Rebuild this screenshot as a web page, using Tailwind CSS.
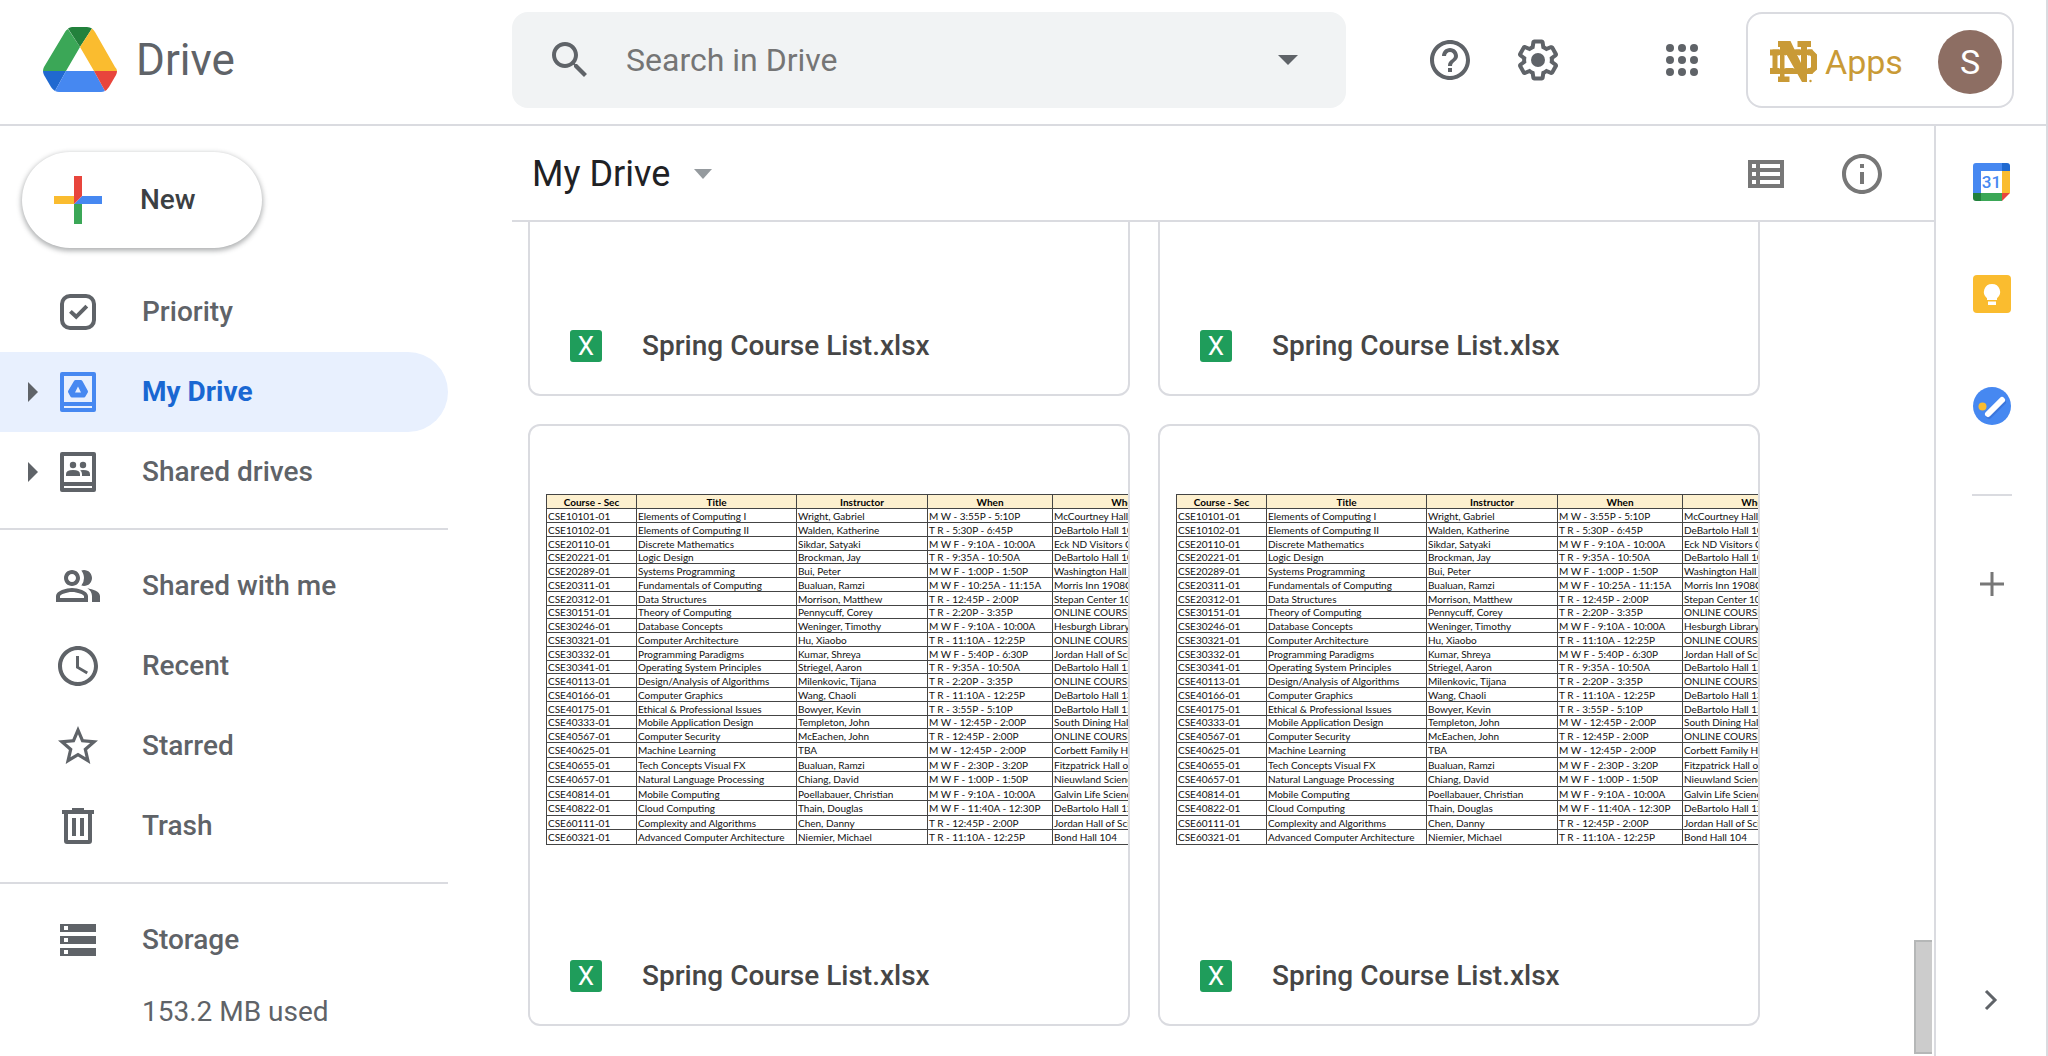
<!DOCTYPE html>
<html lang="en">
<head>
<meta charset="utf-8">
<meta name="viewport" content="width=device-width, initial-scale=1">
<title>My Drive - Google Drive</title>
<script src="https://cdn.jsdelivr.net/npm/@tailwindcss/browser@4"></script>
</head>
<body class="flex h-screen flex-col overflow-hidden border-r-2 border-[#dadbe0] bg-white font-['Roboto',sans-serif] text-[#5f6368]">

<header class="flex h-[126px] shrink-0 items-center border-b-2 border-[#dadbe0] pb-1">
  <a href="#" class="flex w-[512px] shrink-0 items-center gap-[18px] pl-[42px]" aria-label="Drive">
    <svg class="h-[68px] w-[76px]" viewBox="0 0 76 68" aria-hidden="true">
      <path fill="#3ba757" d="M26 3Q24 4 23 6L2 41Q1 43 1 45H24L38 21Z"/>
      <path fill="#22813c" d="M26 2.500Q28 1 30 1H45Q48 1 50 2.500L38 21Z"/>
      <path fill="#fabc2f" d="M50 2.500Q51.500 3.500 53 6L73 41Q75 43 75 45H52L38 21Z"/>
      <path fill="#2069d0" d="M1 45Q1 47 2 49L9 61Q10.500 63.500 13 65L24 45Z"/>
      <path fill="#4688f1" d="M24 45H52L63 65Q61 66 59 66H17Q15 66 13 65Z"/>
      <path fill="#e8453c" d="M52 45H75Q75 47 74 49L67 61Q65 64 63 65Z"/>
    </svg>
    <span class="text-[44px] leading-[52px]">Drive</span>
  </a>

  <form class="flex h-24 w-[834px] min-w-0 items-center rounded-2xl bg-[#f1f3f4] pl-[34px] pr-[48px]" role="search">
    <button type="button" aria-label="Search">
      <svg class="size-12 fill-current" viewBox="0 0 24 24"><path d="M15.5 14h-.79l-.28-.27C15.41 12.59 16 11.11 16 9.500 16 5.910 13.090 3 9.500 3S3 5.910 3 9.500 5.910 16 9.500 16c1.610 0 3.090-.59 4.230-1.570l.27.28v.79l5 4.990L20.490 19l-4.990-5zm-6 0C7.010 14 5 11.990 5 9.500S7.010 5 9.500 5 14 7.010 14 9.500 11.990 14 9.500 14z"/></svg>
    </button>
    <input type="text" aria-label="Search in Drive" placeholder="Search in Drive" class="ml-8 h-16 min-w-0 flex-1 bg-transparent text-[32px] text-[#202124] outline-none placeholder:text-[#757575]">
    <button type="button" aria-label="Search options"><svg class="h-[10px] w-5 fill-current" viewBox="0 0 20 10"><path d="M0 0h20L10 10z"/></svg></button>
  </form>

  <div class="ml-auto flex shrink-0 items-center">
    <button type="button" aria-label="Support" class="mr-10"><svg class="size-12 fill-current" viewBox="0 0 24 24"><path d="M11 18h2v-2h-2v2zm1-16C6.480 2 2 6.480 2 12s4.480 10 10 10 10-4.480 10-10S17.520 2 12 2zm0 18c-4.410 0-8-3.590-8-8s3.590-8 8-8 8 3.590 8 8-3.590 8-8 8zm0-14c-2.210 0-4 1.790-4 4h2c0-1.100.9-2 2-2s2 .9 2 2c0 2-3 1.750-3 5h2c0-2.250 3-2.500 3-5 0-2.210-1.790-4-4-4z"/></svg></button>
    <button type="button" aria-label="Settings" class="mr-24"><svg class="size-12 fill-current" viewBox="0 0 24 24"><path d="M13.850 22.250h-3.700c-.74 0-1.360-.54-1.450-1.270l-.27-1.890c-.27-.14-.53-.29-.79-.46l-1.800.72c-.7.26-1.470-.03-1.810-.65L2.200 15.530c-.35-.66-.2-1.440.36-1.880l1.530-1.190c-.01-.15-.02-.3-.02-.46 0-.15.01-.31.02-.46l-1.520-1.190c-.59-.45-.74-1.260-.37-1.880l1.850-3.190c.34-.62 1.110-.9 1.790-.63l1.810.73c.26-.17.52-.32.78-.46l.27-1.910c.09-.7.71-1.250 1.440-1.250h3.700c.74 0 1.360.54 1.450 1.270l.27 1.890c.27.14.53.29.79.46l1.800-.72c.71-.26 1.480.03 1.820.65l1.840 3.180c.36.66.2 1.440-.36 1.880l-1.520 1.190c.01.15.02.3.02.46s-.01.31-.02.46l1.520 1.190c.56.45.72 1.230.37 1.860l-1.860 3.220c-.34.62-1.110.9-1.800.63l-1.800-.72c-.26.17-.52.32-.78.46l-.27 1.910c-.1.68-.72 1.220-1.460 1.220zm-3.230-2h2.760l.37-2.550.53-.22c.44-.18.88-.44 1.340-.78l.45-.34 2.380.96 1.380-2.400-2.030-1.580.07-.56c.03-.26.06-.51.06-.78s-.03-.53-.06-.78l-.07-.56 2.030-1.580-1.390-2.400-2.390.96-.45-.35c-.42-.32-.87-.58-1.330-.77l-.52-.22-.37-2.550h-2.760l-.37 2.550-.53.21c-.44.19-.88.44-1.340.79l-.45.33-2.380-.95-1.390 2.390 2.030 1.580-.07.56a7 7 0 0 0-.06.79c0 .26.02.53.06.78l.07.56-2.030 1.580 1.380 2.400 2.390-.96.45.35c.43.33.86.58 1.330.77l.53.22.38 2.550z"/><circle cx="12" cy="12" r="3.500"/></svg></button>
    <button type="button" aria-label="Google apps" class="mr-10"><svg class="size-12 fill-current" viewBox="0 0 24 24"><circle cx="6" cy="6" r="2"/><circle cx="12" cy="6" r="2"/><circle cx="18" cy="6" r="2"/><circle cx="6" cy="12" r="2"/><circle cx="12" cy="12" r="2"/><circle cx="18" cy="12" r="2"/><circle cx="6" cy="18" r="2"/><circle cx="12" cy="18" r="2"/><circle cx="18" cy="18" r="2"/></svg></button>
    <button type="button" aria-label="Account" class="mr-8 flex h-24 w-[268px] items-center rounded-2xl border-2 border-[#dadbe0] pl-[22px] pr-[10px] pt-1 text-left">
      <svg class="h-[42px] w-[47px] shrink-0" viewBox="0 0 47 42" fill="#c99a36" aria-hidden="true">
        <path fill-rule="evenodd" d="M0 8.500h42l5 5V28.500l-5 4.500H0v-6h2.500V14.500H0zM7.500 14.500V27H40l1-1V15.500l-1-1z"/>
        <path stroke="#fff" stroke-width="1.600" paint-order="stroke" d="M8 0h12.500L31 22V6h-3.500V0H41v6h-4v35h-5L14.500 10v25.500h5V41H8v-5.500h2V6H8z"/>
        <path d="M2.500 8.500h40v5.500h-40zM2.500 27.500h40V33h-40z"/>
        <circle cx="40.500" cy="40" r="1.200"/>
      </svg>
      <span class="ml-2 text-[34px] leading-10 text-[#c99a36]">Apps</span>
      <span class="ml-auto flex size-16 items-center justify-center rounded-full bg-[#8d6e63] text-[34px] leading-10 text-white">S</span>
    </button>
  </div>
</header>

<div class="flex min-h-0 flex-1">
  <aside class="w-[512px] shrink-0 overflow-hidden pt-[26px]">
    <button type="button" class="ml-[22px] flex h-24 w-60 items-center rounded-full bg-white pl-8 text-[28px] font-medium leading-8 text-[#3c4043] shadow-[0_2px_5px_1px_rgba(60,64,67,0.4)]">
      <svg class="mr-[38px] size-12" viewBox="0 0 48 48" aria-hidden="true"><path fill="#fabc2f" d="M0 20h20v8H0z"/><path fill="#3ba757" d="M20 28h8v20h-8z"/><path fill="#4688f1" d="M28 20h20v8H20z"/><path fill="#e8453c" d="M20 0h8v20l-8 8z"/></svg>
      New
    </button>

    <nav class="mt-6 w-[448px] text-[28px] font-medium leading-8" aria-label="Drive sections">
      <a href="#" class="flex h-20 items-center pl-[54px]">
        <svg class="mr-10 size-12" viewBox="0 0 24 24" fill="none" stroke="currentColor" stroke-width="2"><rect x="4" y="4" width="16" height="16" rx="4"/><path d="M8.200 11.700l2.900 2.700 5.300-5.300"/></svg>Priority
      </a>
      <a href="#" aria-current="page" class="flex h-20 items-center rounded-r-full bg-[#e8f0fe] pl-7 font-bold text-[#1967d2]">
        <svg class="mr-4 h-5 w-[10px] fill-[#5f6368]" viewBox="0 0 10 20"><path d="M0 0l10 10L0 20z"/></svg>
        <svg class="mr-10 size-12" viewBox="0 0 24 24" fill="#4688f1" fill-rule="evenodd"><path d="M4 2h16q1 0 1 1v18q0 1-1 1H4q-1 0-1-1V3q0-1 1-1zm1 2v13h14V4zm0 15v1h14v-1z"/><path d="M10.800 6h2.600q.5 0 .8.500l2.700 4.900q.2.400 0 .800l-1.200 2.100q-.2.500-.7.500H9q-.5 0-.8-.5l-1.100-2.100q-.2-.4 0-.8l2.900-4.900q.3-.5.800-.5zM12 9.300l-1.500 2.900h3z"/></svg>My Drive
      </a>
      <a href="#" class="flex h-20 items-center pl-7">
        <svg class="mr-4 h-5 w-[10px] fill-current" viewBox="0 0 10 20"><path d="M0 0l10 10L0 20z"/></svg>
        <svg class="mr-10 size-12 fill-current" viewBox="0 0 24 24" fill-rule="evenodd"><path d="M4 2h16q1 0 1 1v18q0 1-1 1H4q-1 0-1-1V3q0-1 1-1zm1 2v13h14V4zm0 15v1h14v-1z"/><circle cx="9.500" cy="8.500" r="1.600"/><circle cx="14.500" cy="8.500" r="1.600"/><path d="M6 14v-.9q0-2.100 3.500-2.100t3.500 2.100V14zM14 14v-1q0-1.200-.9-1.900 4.900-.5 4.900 2V14z"/></svg>Shared drives
      </a>
      <hr class="my-4 border-t-2 border-[#dadbe0]">
      <a href="#" class="flex h-20 items-center pl-[54px]">
        <svg class="mr-10 size-12 fill-current" viewBox="0 0 24 24" fill-rule="evenodd"><path d="M15 8c0-1.420-.5-2.730-1.330-3.760.42-.14.86-.24 1.330-.24 2.210 0 4 1.790 4 4s-1.790 4-4 4c-.43 0-.84-.09-1.230-.21-.03-.01-.06-.02-.1-.03A5.980 5.980 0 0 0 15 8zm1.660 5.130C18.030 14.060 19 15.320 19 17v3h4v-3c0-2.180-3.580-3.470-6.340-3.870zM9 6c-1.100 0-2 .9-2 2s.9 2 2 2 2-.9 2-2-.9-2-2-2m0-2c2.210 0 4 1.790 4 4s-1.790 4-4 4-4-1.790-4-4 1.790-4 4-4zM9 15c-2.700 0-5.800 1.290-6 2.010V18h12v-1c-.2-.71-3.300-2-6-2m0-2c2.670 0 8 1.340 8 4v3H1v-3c0-2.660 5.330-4 8-4z"/></svg>Shared with me
      </a>
      <a href="#" class="flex h-20 items-center pl-[54px]">
        <svg class="mr-10 size-12 fill-current" viewBox="0 0 24 24"><path d="M11.990 2C6.470 2 2 6.480 2 12s4.470 10 9.990 10C17.520 22 22 17.520 22 12S17.520 2 11.990 2zM12 20c-4.420 0-8-3.580-8-8s3.580-8 8-8 8 3.580 8 8-3.580 8-8 8zm.5-13H11v6l5.250 3.150.75-1.230-4.500-2.670z"/></svg>Recent
      </a>
      <a href="#" class="flex h-20 items-center pl-[54px]">
        <svg class="mr-10 size-12 fill-current" viewBox="0 0 24 24"><path d="M22 9.240l-7.190-.62L12 2 9.190 8.630 2 9.240l5.460 4.730L5.820 21 12 17.270 18.180 21l-1.630-7.030L22 9.240zM12 15.400l-3.760 2.270 1-4.280-3.320-2.880 4.380-.38L12 6.100l1.710 4.040 4.380.38-3.320 2.880 1 4.280L12 15.400z"/></svg>Starred
      </a>
      <a href="#" class="flex h-20 items-center pl-[54px]">
        <svg class="mr-10 size-12 fill-current" viewBox="0 0 24 24" fill-rule="evenodd"><path d="M9 3h6v1h5v2h-1v13.500q0 1.500-1.500 1.500h-11Q5 21 5 19.500V6H4V4h5zM7 6v13h10V6zM9 8h2v9H9zM13 8h2v9h-2z"/></svg>Trash
      </a>
      <hr class="my-4 border-t-2 border-[#dadbe0]">
      <a href="#" class="flex h-20 items-center pl-[54px]">
        <svg class="mr-10 size-12 fill-current" viewBox="0 0 24 24" fill-rule="evenodd"><path d="M3 4h18v4H3zM5 5v2h2V5zM3 10h18v4H3zM5 11v2h2v-2zM3 16h18v4H3zM5 17v2h2v-2z"/></svg>Storage
      </a>
      <p class="mt-4 pl-[142px] font-normal">153.2 MB used</p>
    </nav>
  </aside>

  <main class="flex min-w-0 flex-1 flex-col">
    <div class="flex h-24 shrink-0 items-center border-b-2 border-[#dadbe0] pl-5 pr-12 pt-0.5">
      <button type="button" class="flex items-center gap-6 text-[36px] leading-10 text-[#202124]">My Drive
        <svg class="h-[10px] w-[18px] fill-[#959a9e]" viewBox="0 0 18 10"><path d="M0 0h18L9 10z"/></svg></button>
      <button type="button" aria-label="List view" class="ml-auto mr-12"><svg class="size-12 fill-[#777777]" viewBox="0 0 24 24" fill-rule="evenodd"><path d="M3 5h18v14H3zM5 7v2h2V7zM9 7v2h10V7zM5 11v2h2v-2zM9 11v2h10v-2zM5 15v2h2v-2zM9 15v2h10v-2z"/></svg></button>
      <button type="button" aria-label="View details"><svg class="size-12 fill-[#777777]" viewBox="0 0 24 24"><path d="M11 7h2v2h-2zM11 11h2v6h-2zM12 2C6.480 2 2 6.480 2 12s4.480 10 10 10 10-4.480 10-10S17.520 2 12 2zm0 18c-4.410 0-8-3.590-8-8s3.590-8 8-8 8 3.590 8 8-3.590 8-8 8z"/></svg></button>
    </div>
    <div class="flex min-h-0 flex-1">
      <div class="flex min-w-0 flex-1 flex-col justify-end overflow-hidden pb-[30px] pl-4">
        <div id="files" class="grid grid-cols-[repeat(auto-fill,602px)] gap-7"></div>
      </div>
      <div class="flex w-5 shrink-0 flex-col justify-end pb-[2px]" aria-hidden="true">
        <div class="h-[114px] w-[18px] border-2 border-r-0 border-[#b5b7b7] bg-[#cccccc]"></div>
      </div>
    </div>
  </main>

  <aside class="flex w-[112px] shrink-0 flex-col items-center border-l-2 border-[#dadbe0] pb-11 pl-0.5 pt-9" aria-label="Side panel">
    <button type="button" aria-label="Calendar"><svg class="size-10" viewBox="0 0 40 40">
      <path fill="#fff" d="M8 8h24v24H8z"/>
      <path fill="#4688f1" d="M4 1h26v8H9v22H1V4q0-3 3-3z"/><path fill="#2069d0" d="M30 1h5q3 0 3 3v5h-8z"/><path fill="#fabc2f" d="M30 9h8v22h-8z"/><path fill="#3ba757" d="M9 31h21v8H9z"/><path fill="#22813c" d="M1 31h8v8H4q-3 0-3-3z"/><path fill="#e8453c" d="M30 31h8l-8 8z"/>
      <text x="19.500" y="26" text-anchor="middle" font-size="17" font-weight="500" fill="#4688f1">31</text></svg></button>
    <button type="button" aria-label="Keep" class="mt-[72px]"><svg class="size-10" viewBox="0 0 40 40"><rect x="1" y="1" width="38" height="38" rx="4" fill="#fabc2f"/><path fill="#fff" d="M20 10a8 8 0 0 0-5 14.300V26h10v-1.700A8 8 0 0 0 20 10zM16 27.500h8V31h-8z"/></svg></button>
    <button type="button" aria-label="Tasks" class="mt-[72px]"><svg class="size-10" viewBox="0 0 40 40"><circle cx="20" cy="20" r="19" fill="#4688f1"/><path stroke="#3c76dc" stroke-width="6" stroke-linecap="round" d="M17 30L31 16"/><path stroke="#fff" stroke-width="6" stroke-linecap="round" d="M16 28L30 14"/><circle cx="10.500" cy="20.500" r="4" fill="#fabc2f"/></svg></button>
    <hr class="mt-[68px] w-10 border-t-2 border-[#dadbe0]">
    <button type="button" aria-label="Get add-ons" class="mt-[76px]"><svg class="size-6" viewBox="0 0 24 24" stroke="#777777" stroke-width="3"><path d="M12 0v24M0 12h24"/></svg></button>
    <button type="button" aria-label="Hide side panel" class="mt-auto"><svg class="size-6" viewBox="0 0 24 24" fill="none" stroke="currentColor" stroke-width="3"><path d="M6 3l9 9-9 9"/></svg></button>
  </aside>
</div>

<script>
  const courses = [
    ['CSE10101-01', 'Elements of Computing I', 'Wright, Gabriel', 'M W - 3:55P - 5:10P', 'McCourtney Hall B01'],
    ['CSE10102-01', 'Elements of Computing II', 'Walden, Katherine', 'T R - 5:30P - 6:45P', 'DeBartolo Hall 102'],
    ['CSE20110-01', 'Discrete Mathematics', 'Sikdar, Satyaki', 'M W F - 9:10A - 10:00A', 'Eck ND Visitors Center'],
    ['CSE20221-01', 'Logic Design', 'Brockman, Jay', 'T R - 9:35A - 10:50A', 'DeBartolo Hall 102'],
    ['CSE20289-01', 'Systems Programming', 'Bui, Peter', 'M W F - 1:00P - 1:50P', 'Washington Hall A'],
    ['CSE20311-01', 'Fundamentals of Computing', 'Bualuan, Ramzi', 'M W F - 10:25A - 11:15A', 'Morris Inn 1908C'],
    ['CSE20312-01', 'Data Structures', 'Morrison, Matthew', 'T R - 12:45P - 2:00P', 'Stepan Center 101'],
    ['CSE30151-01', 'Theory of Computing', 'Pennycuff, Corey', 'T R - 2:20P - 3:35P', 'ONLINE COURSE'],
    ['CSE30246-01', 'Database Concepts', 'Weninger, Timothy', 'M W F - 9:10A - 10:00A', 'Hesburgh Library 1'],
    ['CSE30321-01', 'Computer Architecture', 'Hu, Xiaobo', 'T R - 11:10A - 12:25P', 'ONLINE COURSE'],
    ['CSE30332-01', 'Programming Paradigms', 'Kumar, Shreya', 'M W F - 5:40P - 6:30P', 'Jordan Hall of Science'],
    ['CSE30341-01', 'Operating System Principles', 'Striegel, Aaron', 'T R - 9:35A - 10:50A', 'DeBartolo Hall 155'],
    ['CSE40113-01', 'Design/Analysis of Algorithms', 'Milenkovic, Tijana', 'T R - 2:20P - 3:35P', 'ONLINE COURSE'],
    ['CSE40166-01', 'Computer Graphics', 'Wang, Chaoli', 'T R - 11:10A - 12:25P', 'DeBartolo Hall 131'],
    ['CSE40175-01', 'Ethical & Professional Issues', 'Bowyer, Kevin', 'T R - 3:55P - 5:10P', 'DeBartolo Hall 155'],
    ['CSE40333-01', 'Mobile Application Design', 'Templeton, John', 'M W - 12:45P - 2:00P', 'South Dining Hall'],
    ['CSE40567-01', 'Computer Security', 'McEachen, John', 'T R - 12:45P - 2:00P', 'ONLINE COURSE'],
    ['CSE40625-01', 'Machine Learning', 'TBA', 'M W - 12:45P - 2:00P', 'Corbett Family Hall'],
    ['CSE40655-01', 'Tech Concepts Visual FX', 'Bualuan, Ramzi', 'M W F - 2:30P - 3:20P', 'Fitzpatrick Hall of Eng'],
    ['CSE40657-01', 'Natural Language Processing', 'Chiang, David', 'M W F - 1:00P - 1:50P', 'Nieuwland Science'],
    ['CSE40814-01', 'Mobile Computing', 'Poellabauer, Christian', 'M W F - 9:10A - 10:00A', 'Galvin Life Science'],
    ['CSE40822-01', 'Cloud Computing', 'Thain, Douglas', 'M W F - 11:40A - 12:30P', 'DeBartolo Hall 129'],
    ['CSE60111-01', 'Complexity and Algorithms', 'Chen, Danny', 'T R - 12:45P - 2:00P', 'Jordan Hall of Science'],
    ['CSE60321-01', 'Advanced Computer Architecture', 'Niemier, Michael', 'T R - 11:10A - 12:25P', 'Bond Hall 104'],
  ];

  // Spreadsheet rows: mostly 14px, every fourth one 13px; the last eight alternate 14px and 15px.
  const rowHeight = i => i < 16 ? (i % 4 === 3 ? 'h-[13px]' : 'h-[14px]') : (i % 2 ? 'h-[15px]' : 'h-[14px]');
  const esc = s => s.replace('&', '&amp;');

  const sheet = `
    <table class="w-[654px] table-fixed border-collapse font-['Lato',sans-serif] text-[10px] leading-[12px] whitespace-nowrap text-[#111111]">
      <colgroup><col class="w-[90px]"><col class="w-[160px]"><col class="w-[131px]"><col class="w-[125px]"><col class="w-[148px]"></colgroup>
      <thead><tr class="h-[14px] bg-[#fdf0cf] text-black">${['Course - Sec', 'Title', 'Instructor', 'When', 'Where']
        .map(h => `<th class="border border-[#444444] p-0 font-bold">${h}</th>`).join('')}</tr></thead>
      <tbody>${courses.map((row, i) => `<tr class="${rowHeight(i)}">${row
        .map(c => `<td class="overflow-hidden border border-[#444444] p-0 pl-px">${esc(c)}</td>`).join('')}</tr>`).join('')}</tbody>
    </table>`;

  const card = preview => `
    <article class="flex aspect-square flex-col overflow-hidden rounded-xl border-2 border-[#dadbe0]">
      <div class="min-h-0 flex-1 overflow-hidden pl-4 pt-[68px]">${preview}</div>
      <a href="#" class="flex h-24 shrink-0 items-center gap-10 pl-10 text-[28px] font-medium leading-8 text-[#464646]">
        <span class="flex size-8 items-center justify-center rounded-[3px] bg-[#1f9d5b] text-[26px] font-normal text-white" aria-hidden="true">X</span>
        Spring Course List.xlsx
      </a>
    </article>`;

  document.getElementById('files').innerHTML = card('') + card('') + card(sheet) + card(sheet);
</script>
</body>
</html>
